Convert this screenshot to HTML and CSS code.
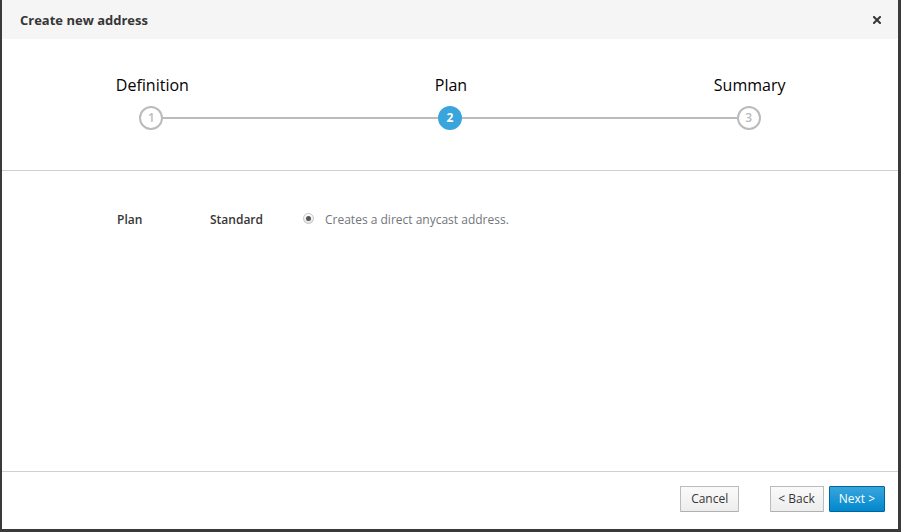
FILE: index.html
```html
<!DOCTYPE html>
<html>
<head>
<meta charset="utf-8">
<link rel="stylesheet" href="styles.css">
</head>
<body>
<div class="modal">
  <div class="modal-header">
    <h4 class="modal-title">Create new address</h4>
    <button class="close" aria-label="Close">
      <svg width="8" height="8" viewBox="0 0 8 8"><path d="M1 1L7 7M7 1L1 7" stroke="#363636" stroke-width="2" stroke-linecap="square"/></svg>
    </button>
  </div>
  <div class="modal-body">
    <div class="steps">
      <div class="step first">
        <div class="step-label">Definition</div>
        <div class="step-track"><span class="line"></span><span class="circle">1</span><span class="line"></span></div>
      </div>
      <div class="step active">
        <div class="step-label">Plan</div>
        <div class="step-track"><span class="line"></span><span class="circle">2</span><span class="line"></span></div>
      </div>
      <div class="step last">
        <div class="step-label">Summary</div>
        <div class="step-track"><span class="line"></span><span class="circle">3</span><span class="line"></span></div>
      </div>
    </div>
    <div class="form">
      <div class="form-row">
        <div class="form-label">Plan</div>
        <div class="plan-name">Standard</div>
        <label class="radio-option">
          <span class="radio"><span class="dot"></span></span>
          <span class="radio-text">Creates a direct anycast address.</span>
        </label>
      </div>
    </div>
  </div>
  <div class="modal-footer">
    <button class="btn btn-default btn-cancel">Cancel</button>
    <div class="nav-btns">
      <button class="btn btn-default btn-back">&lt; Back</button>
      <button class="btn btn-primary">Next &gt;</button>
    </div>
  </div>
</div>
</body>
</html>
```

FILE: styles.css
```css
html, body {
  margin: 0;
  padding: 0;
  height: 100%;
}
body {
  background: #3a3a3a;
  font-family: "Open Sans", "Liberation Sans", sans-serif;
  color: #363636;
  font-size: 12px;
}
.modal {
  margin-left: 2px;
  width: 896px;
  height: 529px;
  background: #fff;
  display: flex;
  flex-direction: column;
}
.modal-header {
  height: 39px;
  background: #f5f5f5;
  display: flex;
  align-items: center;
  justify-content: space-between;
  padding: 0 17px 0 18px;
  flex: none;
}
.modal-title {
  margin: 0;
  font-size: 13px;
  font-weight: 700;
  color: #363636;
}
.close {
  border: 0;
  background: none;
  padding: 0;
  width: 8px;
  height: 8px;
  display: flex;
  margin-top: 1px;
}
.modal-body {
  flex: 1;
}
.steps {
  display: flex;
  padding-top: 35px;
  padding-bottom: 40px;
  border-bottom: 1px solid #d1d1d1;
}
.step {
  flex: 1;
  display: flex;
  flex-direction: column;
  align-items: center;
}
.step-label {
  font-size: 16px;
  line-height: 22px;
  color: #030303;
  margin-bottom: 10px;
  margin-left: 2px;
}
.step-track {
  display: flex;
  align-items: center;
  width: 100%;
}
.line {
  flex: 1;
  height: 2px;
  background: #bbb;
}
.first .line:first-child,
.last .line:last-child {
  background: transparent;
}
.circle {
  width: 20px;
  height: 20px;
  border: 2px solid #bbb;
  border-radius: 50%;
  background: #fff;
  color: #bbb;
  font-size: 12px;
  font-weight: 600;
  display: flex;
  align-items: center;
  justify-content: center;
  line-height: 1;
}
.active .circle {
  background: #39a5dc;
  border-color: #39a5dc;
  color: #fff;
  font-weight: 700;
}
.form {
  padding: 40px 0 0 115px;
}
.form-row {
  display: flex;
  align-items: center;
  line-height: 18px;
}
.form-label {
  width: 93px;
  font-weight: 600;
}
.plan-name {
  width: 93px;
  font-weight: 600;
}
.radio-option {
  display: flex;
  align-items: center;
}
.radio {
  width: 9px;
  height: 9px;
  border: 1px solid #c5c5c5;
  border-radius: 50%;
  background: linear-gradient(#fff, #e4e4e4);
  display: flex;
  align-items: center;
  justify-content: center;
  margin-top: -3px;
}
.dot {
  width: 5px;
  height: 5px;
  border-radius: 50%;
  background: #555;
}
.radio-text {
  margin-left: 11px;
  color: #72767b;
}
.modal-footer {
  flex: none;
  height: 58px;
  border-top: 1px solid #d1d1d1;
  display: flex;
  align-items: flex-start;
  justify-content: flex-end;
  padding: 14px 13px 0 0;
  box-sizing: border-box;
}
.nav-btns {
  display: flex;
  gap: 5px;
  margin-left: 31px;
}
.btn {
  font-family: inherit;
  font-size: 12px;
  line-height: 20px;
  padding: 2px 9px;
  border-radius: 1px;
  border: 1px solid #bbb;
  cursor: pointer;
}
.btn-cancel {
  padding: 2px 10px;
}
.btn-back {
  padding: 2px 8px 2px 7px;
}
.btn-default {
  background: linear-gradient(#fafafa, #ededed);
  color: #363636;
  border-color: #bbb #bbb #b0b0b0;
}
.btn-primary {
  background: linear-gradient(#39a5dc, #0088ce);
  border-color: #00659c;
  color: #fff;
}
```
